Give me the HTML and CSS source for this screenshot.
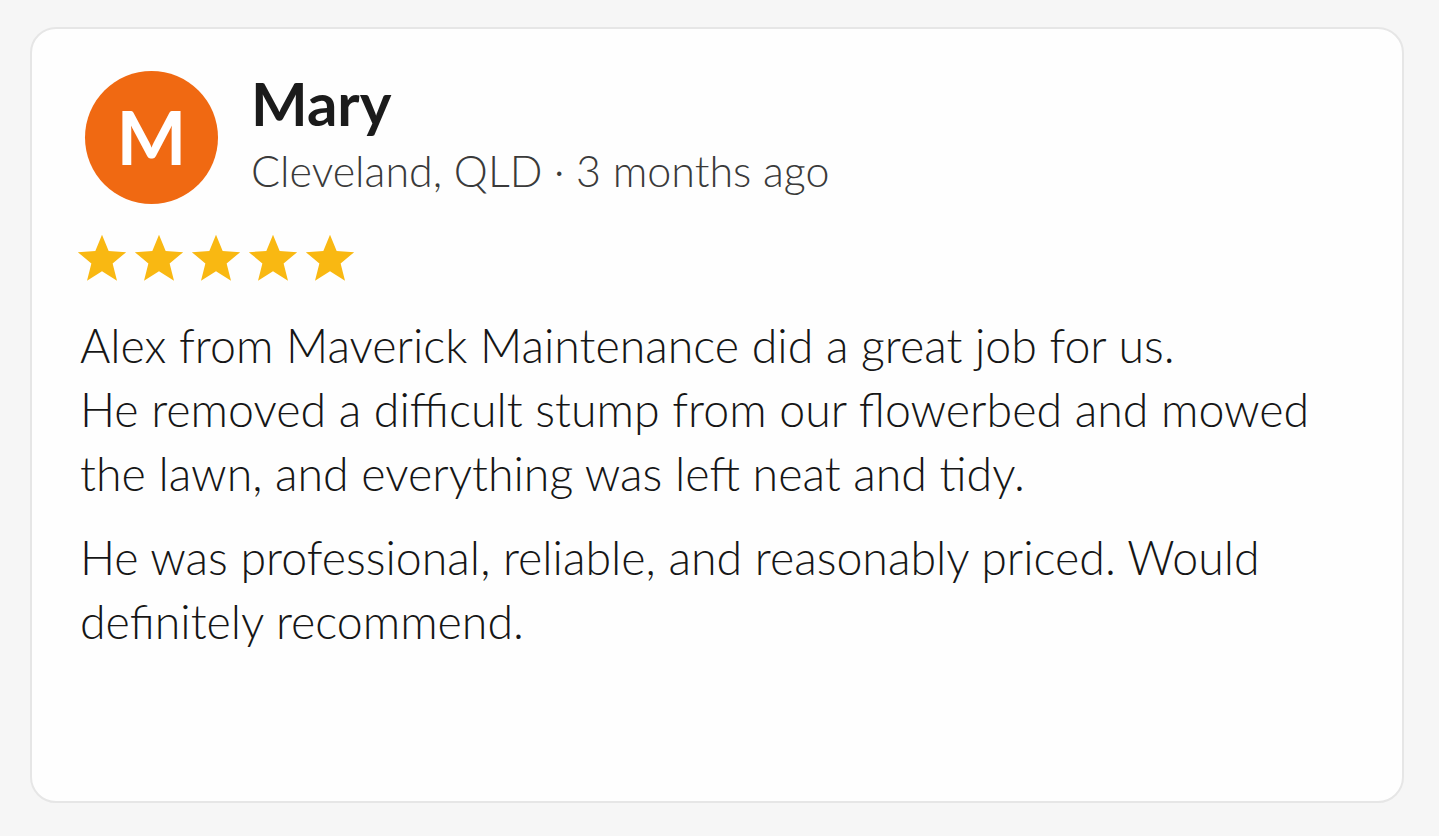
FILE: index.html
```html
<!DOCTYPE html>
<html lang="en">
<head>
<meta charset="utf-8">
<title>Review</title>
<link rel="stylesheet" href="styles.css">
</head>
<body>
<div class="page">
  <article class="card">
    <header class="head">
      <div class="avatar">M</div>
      <div class="who">
        <div class="name">Mary</div>
        <div class="meta">Cleveland, QLD · 3 months ago</div>
      </div>
    </header>
    <div class="stars">
      <svg viewBox="0 0 24 24" class="star"><path d="M12 .8l3.2 7.8 8.4.6-6.5 5.4 2.1 8.3L12 18.4l-7.2 4.5 2.1-8.3L.4 9.2l8.4-.6z"/></svg>
      <svg viewBox="0 0 24 24" class="star"><path d="M12 .8l3.2 7.8 8.4.6-6.5 5.4 2.1 8.3L12 18.4l-7.2 4.5 2.1-8.3L.4 9.2l8.4-.6z"/></svg>
      <svg viewBox="0 0 24 24" class="star"><path d="M12 .8l3.2 7.8 8.4.6-6.5 5.4 2.1 8.3L12 18.4l-7.2 4.5 2.1-8.3L.4 9.2l8.4-.6z"/></svg>
      <svg viewBox="0 0 24 24" class="star"><path d="M12 .8l3.2 7.8 8.4.6-6.5 5.4 2.1 8.3L12 18.4l-7.2 4.5 2.1-8.3L.4 9.2l8.4-.6z"/></svg>
      <svg viewBox="0 0 24 24" class="star"><path d="M12 .8l3.2 7.8 8.4.6-6.5 5.4 2.1 8.3L12 18.4l-7.2 4.5 2.1-8.3L.4 9.2l8.4-.6z"/></svg>
    </div>
    <div class="body">
      <p>Alex from Maverick Maintenance did a great job for us.<br>He removed a difficult stump from our flowerbed and mowed<br>the lawn, and everything was left neat and tidy.</p>
      <p>He was professional, reliable, and reasonably priced. Would<br>definitely recommend.</p>
    </div>
  </article>
</div>
</body>
</html>
```
FILE: styles.css
```css
html, body {
  margin: 0;
  padding: 0;
  background: #f6f6f6;
}
body {
  font-family: "Lato", "Open Sans", sans-serif;
  color: #1c1c1c;
}
.page {
  padding: 27px 35px 33px 30px;
}
.card {
  box-sizing: border-box;
  height: 776px;
  background: #fefefe;
  border: 2px solid #e6e6e6;
  border-radius: 26px;
  padding: 42px 40px 40px 48px;
}
.head {
  display: flex;
  align-items: flex-start;
  gap: 33px;
  margin-left: 5px;
}
.avatar {
  width: 133px;
  height: 133px;
  border-radius: 50%;
  background: #f06912;
  color: #fff;
  font-size: 74px;
  font-weight: 700;
  line-height: 1;
  display: flex;
  align-items: center;
  justify-content: center;
  flex: none;
  padding-bottom: 2px;
  box-sizing: border-box;
}
.name {
  font-size: 60px;
  font-weight: 700;
  line-height: 64px;
  color: #1b1b1b;
}
.meta {
  font-size: 43px;
  font-weight: 300;
  line-height: 52px;
  color: #3a3a3a;
  margin-top: 10px;
}
.stars {
  display: flex;
  gap: 7px;
  margin-top: 29px;
  margin-left: -3px;
}
.star {
  width: 50px;
  height: 50px;
  fill: #f9b812;
}
.body {
  margin-top: 30px;
  font-size: 46.5px;
  font-weight: 300;
  line-height: 64px;
  color: #161616;
  white-space: nowrap;
}
.body p {
  margin: 0 0 20px 0;
}
```
